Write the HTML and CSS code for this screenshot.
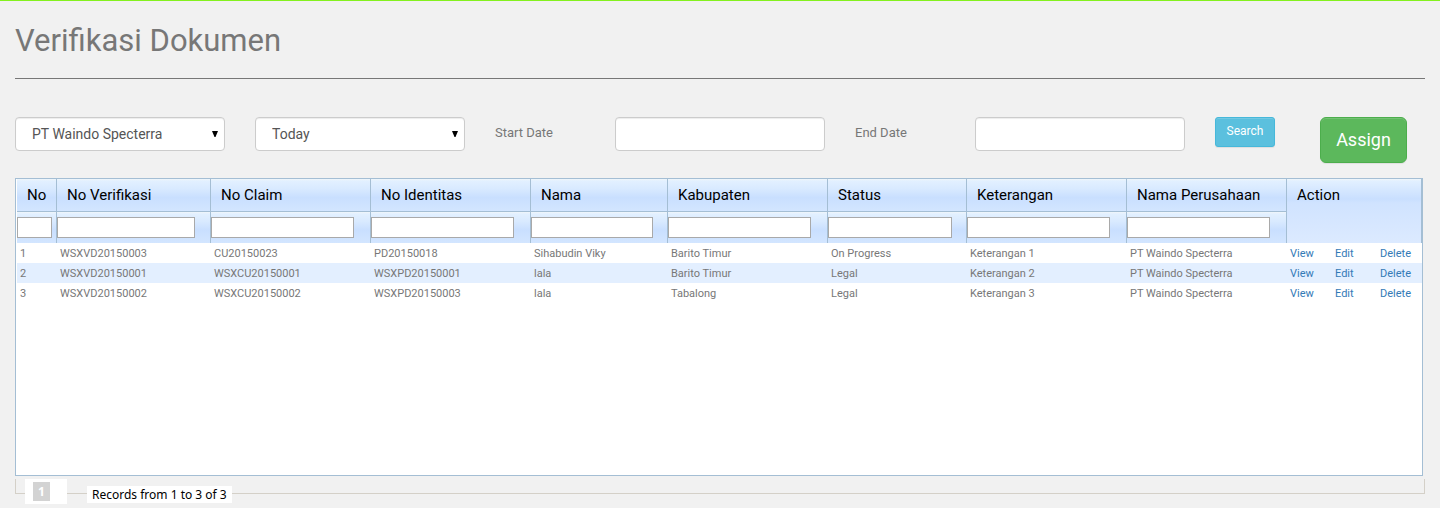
FILE: index.html
```html
<!DOCTYPE html>
<html lang="id">
<head>
<meta charset="utf-8">
<meta name="viewport" content="width=device-width, initial-scale=1">
<title>Verifikasi Dokumen</title>
<link rel="stylesheet" href="styles.css">
</head>
<body>
<main class="page">
  <h1 class="title">Verifikasi Dokumen</h1>

  <form class="filters">
    <div class="select wide">
      <select class="control" aria-label="Perusahaan"><option>PT Waindo Specterra</option></select>
      <svg class="arrow" viewBox="0 0 6 6" aria-hidden="true"><path d="M0 0H6L3.500 6H2.500Z"/></svg>
    </div>
    <div class="select wide">
      <select class="control" aria-label="Periode"><option>Today</option></select>
      <svg class="arrow" viewBox="0 0 6 6" aria-hidden="true"><path d="M0 0H6L3.500 6H2.500Z"/></svg>
    </div>
    <label class="label" for="start">Start Date</label>
    <input class="control wide" id="start" type="text">
    <label class="label" for="end">End Date</label>
    <input class="control wide" id="end" type="text">
    <div class="actions wide">
      <button class="btn btn-info" type="button">Search</button>
      <button class="btn btn-success" type="button">Assign</button>
    </div>
  </form>

  <div class="grid">
    <table class="table">
      <colgroup>
        <col class="c-no"><col class="c-verif"><col class="c-std"><col class="c-std"><col class="c-nama"><col class="c-std"><col class="c-status"><col class="c-std"><col class="c-std"><col><col><col>
      </colgroup>
      <thead>
        <tr class="heads">
          <th scope="col">No</th>
          <th scope="col">No Verifikasi</th>
          <th scope="col">No Claim</th>
          <th scope="col">No Identitas</th>
          <th scope="col">Nama</th>
          <th scope="col">Kabupaten</th>
          <th scope="col">Status</th>
          <th scope="col">Keterangan</th>
          <th scope="col">Nama Perusahaan</th>
          <th scope="col" colspan="3" rowspan="2" class="action">Action</th>
        </tr>
        <tr class="search">
          <td><input type="text" aria-label="No"></td>
          <td><input type="text" aria-label="No Verifikasi"></td>
          <td><input type="text" aria-label="No Claim"></td>
          <td><input type="text" aria-label="No Identitas"></td>
          <td><input type="text" aria-label="Nama"></td>
          <td><input type="text" aria-label="Kabupaten"></td>
          <td><input type="text" aria-label="Status"></td>
          <td><input type="text" aria-label="Keterangan"></td>
          <td><input type="text" aria-label="Nama Perusahaan"></td>
        </tr>
      </thead>
      <tbody>
        <tr><td>1</td><td>WSXVD20150003</td><td>CU20150023</td><td>PD20150018</td><td>Sihabudin Viky</td><td>Barito Timur</td><td>On Progress</td><td>Keterangan 1</td><td>PT Waindo Specterra</td><td><a href="#">View</a></td><td><a href="#">Edit</a></td><td><a href="#">Delete</a></td></tr>
        <tr><td>2</td><td>WSXVD20150001</td><td>WSXCU20150001</td><td>WSXPD20150001</td><td>lala</td><td>Barito Timur</td><td>Legal</td><td>Keterangan 2</td><td>PT Waindo Specterra</td><td><a href="#">View</a></td><td><a href="#">Edit</a></td><td><a href="#">Delete</a></td></tr>
        <tr><td>3</td><td>WSXVD20150002</td><td>WSXCU20150002</td><td>WSXPD20150003</td><td>lala</td><td>Tabalong</td><td>Legal</td><td>Keterangan 3</td><td>PT Waindo Specterra</td><td><a href="#">View</a></td><td><a href="#">Edit</a></td><td><a href="#">Delete</a></td></tr>
      </tbody>
    </table>
  </div>

  <footer class="pager">
    <nav class="pages" aria-label="Halaman"><a class="current" href="#" aria-current="page">1</a></nav>
    <div class="records">Records from 1 to 3 of 3</div>
  </footer>
</main>
</body>
</html>
```
FILE: styles.css
```css
*,
*::before {
  box-sizing: border-box;
}

body {
  margin: 0;
  border-top: 1px solid #84f11e;
  background: #f1f1f1;
  color: #777;
  font-family: Roboto, sans-serif;
  font-size: 13px;
}

.page {
  padding: 0 15px;
}

.title {
  margin: 0 0 38px;
  padding: 20px 0 17px;
  border-bottom: 1px solid #777;
  font-size: 31px;
  font-weight: 400;
  line-height: 40px;
}

.filters {
  display: grid;
  grid-template-columns: repeat(12, 1fr);
  column-gap: 30px;
  align-items: start;
  margin-bottom: 15px;
}

.wide {
  grid-column: span 2;
}

.select {
  position: relative;
}

.control {
  width: 100%;
  height: 34px;
  padding: 0 16px;
  border: 1px solid #ccc;
  border-radius: 4px;
  background: #fff;
  box-shadow: inset 0 1px 1px rgba(0, 0, 0, 0.075);
  color: #555;
  font: 14px/20px Roboto, sans-serif;
  appearance: none;
}

.arrow {
  position: absolute;
  top: 14px;
  right: 7px;
  width: 6px;
  height: 6px;
  pointer-events: none;
}

.label {
  line-height: 31px;
  white-space: nowrap;
}

.actions {
  display: flex;
  align-items: flex-start;
  justify-content: space-between;
  padding-right: 18px;
}

.btn {
  border: 1px solid;
  box-shadow: inset 0 1px 0 rgba(255, 255, 255, 0.15), 0 1px 1px rgba(0, 0, 0, 0.075);
  color: #fff;
  font-family: Roboto, sans-serif;
}

.btn-info {
  width: 60px;
  height: 30px;
  padding: 0 0 2px;
  border-color: #46b8da;
  border-radius: 3px;
  background: #5bc0de;
  font-size: 12px;
}

.btn-success {
  width: 87px;
  height: 46px;
  padding: 0 0 2px;
  border-color: #4cae4c;
  border-radius: 6px;
  background: #5cb85c;
  font-size: 18px;
}

.grid {
  min-height: 298px;
  margin-right: 2px;
  padding-left: 1px;
  border: 1px solid #a4bed4;
  background: #fff;
}

.table {
  width: 100%;
  table-layout: fixed;
  border-collapse: separate;
  border-spacing: 0;
  font-family: Roboto, sans-serif;
  font-size: 11px;
}

.c-no { width: 40px; }
.c-verif { width: 154px; }
.c-std { width: 160px; }
.c-nama { width: 137px; }
.c-status { width: 139px; }

.table th,
.search td {
  border-right: 1px solid #a4bed4;
  background: linear-gradient(#f0f6fa 0, #e2f0ff 2px, #d9eaff 30%, #c9dfff 58%, #d3e6ff 100%);
}

.table th {
  height: 33px;
  padding: 0 0 0 10px;
  border-bottom: 1px solid #a4bed4;
  color: #000;
  font: 400 15px/20px Roboto, sans-serif;
  text-align: left;
  white-space: nowrap;
}

.table .action {
  padding-top: 6px;
  border-bottom: 0;
  background: linear-gradient(#f0f6fa 0, #e2f0ff 2px, #c9dfff 20px, #d0e3ff 24px, #dceaff 100%);
  vertical-align: top;
}

.search td {
  height: 31px;
  padding: 0;
}

.search input {
  display: block;
  width: 90%;
  height: 21px;
  padding: 0 2px;
  border: 1px solid #a9a9a9;
  background: #fff;
  font: inherit;
}

tbody td {
  height: 20px;
  padding: 0 0 0 3px;
  white-space: nowrap;
}

tbody tr:nth-child(even) {
  background: #e3efff;
}

.table a {
  color: #337ab7;
  text-decoration: none;
}

.pager {
  position: relative;
  display: flex;
  gap: 20px;
  margin-top: 3px;
  padding-left: 10px;
}

.pager::before {
  position: absolute;
  top: 0;
  right: 0;
  left: 0;
  height: 15px;
  border: 1px solid #d4d0c8;
  border-top: 0;
  content: "";
}

.pages,
.records {
  position: relative;
  background: #fff;
  font-family: "Noto Sans", sans-serif;
}

.pages {
  width: 42px;
  padding: 3px 8px;
}

.current {
  display: block;
  width: 17px;
  background: #d3d3d3;
  color: #fff;
  font-size: 12px;
  font-weight: 700;
  line-height: 19px;
  text-align: center;
  text-decoration: none;
}

.records {
  margin: 7px 0 1px;
  padding: 0 5px;
  color: #000;
  font-size: 12px;
  line-height: 17px;
}
```
